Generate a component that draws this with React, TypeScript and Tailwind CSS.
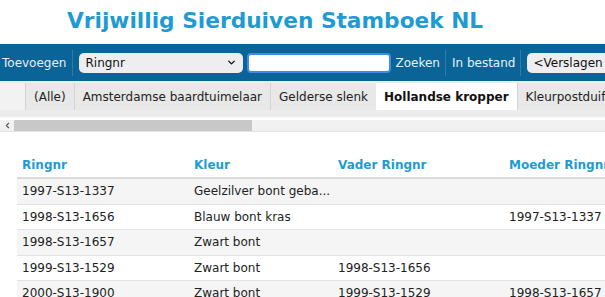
import { ChevronDown, ChevronLeft } from "lucide-react";

const tabs = ["(Alle)", "Amsterdamse baardtuimelaar", "Gelderse slenk", "Hollandse kropper", "Kleurpostduif"];

const rows = [
  { ring: "1997-S13-1337", kleur: "Geelzilver bont geba...", vader: "", moeder: "" },
  { ring: "1998-S13-1656", kleur: "Blauw bont kras", vader: "", moeder: "1997-S13-1337" },
  { ring: "1998-S13-1657", kleur: "Zwart bont", vader: "", moeder: "" },
  { ring: "1999-S13-1529", kleur: "Zwart bont", vader: "1998-S13-1656", moeder: "" },
  { ring: "2000-S13-1900", kleur: "Zwart bont", vader: "1999-S13-1529", moeder: "1998-S13-1657" },
];

export default function App() {
  return (
    <div className="w-[605px] h-[297px] overflow-hidden bg-white font-['DejaVu_Sans',Verdana,sans-serif] text-[12px] text-[#222]">
      <h1 className="h-[44px] pl-[67px] pt-[7px] text-[21.7px] leading-[28px] font-bold text-[#1f9bd4] whitespace-nowrap">
        Vrijwillig Sierduiven Stamboek NL
      </h1>

      {/* toolbar */}
      <div className="flex items-center h-[37px] bg-[#0b6498] text-[#e8f0f7] whitespace-nowrap">
        <span className="shrink-0 pl-[2px] pr-[6px]">Toevoegen</span>
        <div className="shrink-0 w-px h-[26px] bg-[#2f7cab]" />
        <div className="shrink-0 ml-[6px] w-[164px] h-[20px] rounded-[5px] bg-[#eeeef0] text-[#111] flex items-center justify-between pl-[6px] pr-[6px]">
          <span>Ringnr</span>
          <ChevronDown size={11} strokeWidth={3} />
        </div>
        <div className="shrink-0 ml-[4px] w-[144px] h-[20px] rounded-[4px] bg-white border-2 border-[#3d8bf0]" />
        <span className="shrink-0 pl-[4px] pr-[5px]">Zoeken</span>
        <div className="shrink-0 w-px h-[26px] bg-[#2f7cab]" />
        <span className="shrink-0 pl-[6px] pr-[5px]">In bestand</span>
        <div className="shrink-0 w-px h-[26px] bg-[#2f7cab]" />
        <div className="shrink-0 ml-[6px] h-[20px] rounded-[5px] bg-[#eeeef0] text-[#111] flex items-center pl-[6px] pr-[10px]">
          &lt;Verslagen
        </div>
      </div>

      {/* tabs */}
      <div className="h-[36px] bg-[#ececec] pt-[2px] whitespace-nowrap">
        <div className="flex h-[27px]">
          <div className="w-[25px] shrink-0 bg-[#f2f2f2]" />
          {tabs.map((t) => (
            <div
              key={t}
              className={
                t === "Hollandse kropper"
                  ? "shrink-0 flex items-center px-[8px] bg-white font-bold text-[#111]"
                  : "shrink-0 flex items-center px-[8px] bg-[#e8e8e8] border-l border-[#d4d4d4] text-[#222]"
              }
            >
              {t}
            </div>
          ))}
        </div>
      </div>

      {/* scrollbar */}
      <div className="mt-[3px] flex h-[12px] bg-[#f1f1f1] border-b border-[#e4e4e4]">
        <div className="w-[14px] flex items-center justify-center text-[#555]">
          <ChevronLeft size={9} strokeWidth={3} />
        </div>
        <div className="w-[238px] bg-[#c8c8c8]" />
      </div>

      {/* table */}
      <div className="mt-[21px] ml-[17px] w-[640px]">
        <div className="flex h-[26px] items-center border-b-2 border-[#dcdcdc] font-bold text-[#1f9bd4] whitespace-nowrap">
          <div className="w-[172px] pl-[5px]">Ringnr</div>
          <div className="w-[144px] pl-[5px]">Kleur</div>
          <div className="w-[171px] pl-[5px]">Vader Ringnr</div>
          <div className="pl-[5px]">Moeder Ringnr</div>
        </div>
        {rows.map((r, i) => (
          <div
            key={r.ring}
            className={`flex h-[25.5px] items-center border-b border-[#e2e2e2] whitespace-nowrap ${
              i % 2 === 0 ? "bg-[#f5f5f5]" : "bg-white"
            }`}
          >
            <div className="w-[172px] pl-[5px]">{r.ring}</div>
            <div className="w-[144px] pl-[5px]">{r.kleur}</div>
            <div className="w-[171px] pl-[5px]">{r.vader}</div>
            <div className="pl-[5px]">{r.moeder}</div>
          </div>
        ))}
      </div>
    </div>
  );
}
